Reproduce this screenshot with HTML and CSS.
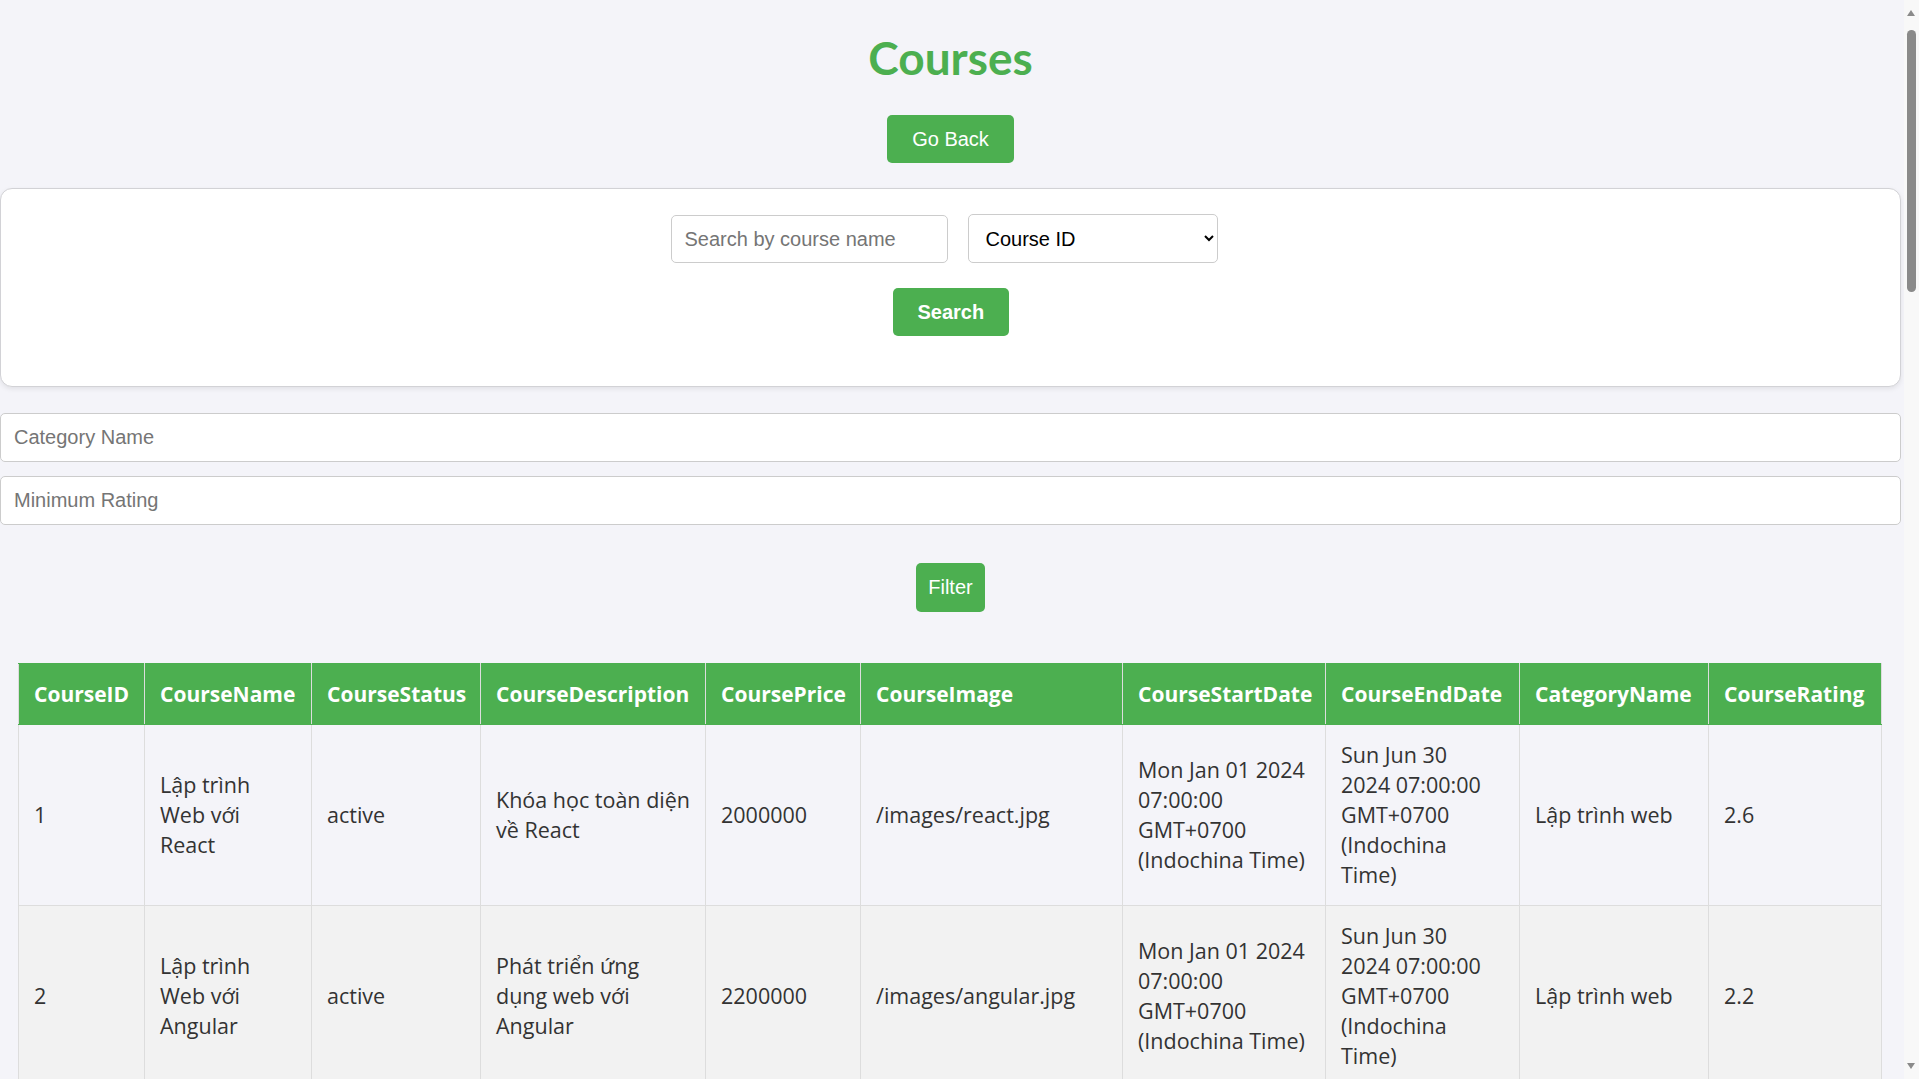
FILE: index.html
```html
<!DOCTYPE html>
<html lang="vi">
<head>
<meta charset="utf-8">
<title>Courses</title>
<link rel="stylesheet" href="styles.css">
</head>
<body>
<div class="page">
  <h1 class="title">Courses</h1>
  <div class="center"><button class="btn btn-back">Go Back</button></div>

  <div class="card">
    <div class="search-row">
      <input class="field search-input" type="text" placeholder="Search by course name">
      <select class="field sort-select">
        <option>Course ID</option>
      </select>
    </div>
    <div class="center"><button class="btn btn-search">Search</button></div>
  </div>

  <input class="field wide first" type="text" placeholder="Category Name">
  <input class="field wide second" type="text" placeholder="Minimum Rating">

  <div class="center"><button class="btn btn-filter">Filter</button></div>

  <table class="courses">
    <colgroup>
      <col class="c1"><col class="c2"><col class="c3"><col class="c4"><col class="c5">
      <col class="c6"><col class="c7"><col class="c8"><col class="c9"><col class="c10">
    </colgroup>
    <thead>
      <tr>
        <th>CourseID</th>
        <th>CourseName</th>
        <th>CourseStatus</th>
        <th>CourseDescription</th>
        <th>CoursePrice</th>
        <th>CourseImage</th>
        <th>CourseStartDate</th>
        <th>CourseEndDate</th>
        <th>CategoryName</th>
        <th>CourseRating</th>
      </tr>
    </thead>
    <tbody>
      <tr>
        <td>1</td>
        <td>Lập trình Web với React</td>
        <td>active</td>
        <td>Khóa học toàn diện về React</td>
        <td>2000000</td>
        <td>/images/react.jpg</td>
        <td>Mon Jan 01 2024 07:00:00 GMT+0700 (Indochina Time)</td>
        <td class="end-date">Sun Jun 30 2024 07:00:00 GMT+0700 (Indochina Time)</td>
        <td>Lập trình web</td>
        <td>2.6</td>
      </tr>
      <tr>
        <td>2</td>
        <td>Lập trình Web với Angular</td>
        <td>active</td>
        <td>Phát triển ứng dụng web với Angular</td>
        <td>2200000</td>
        <td>/images/angular.jpg</td>
        <td>Mon Jan 01 2024 07:00:00 GMT+0700 (Indochina Time)</td>
        <td class="end-date">Sun Jun 30 2024 07:00:00 GMT+0700 (Indochina Time)</td>
        <td>Lập trình web</td>
        <td>2.2</td>
      </tr>
    </tbody>
  </table>
</div>
<div class="scrollbar" aria-hidden="true">
  <span class="arrow up"></span>
  <span class="thumb"></span>
  <span class="arrow down"></span>
</div>
</body>
</html>
```

FILE: styles.css
```css
html, body {
  margin: 0;
  padding: 0;
}

body {
  background: #f4f4f9;
  font-family: "Open Sans", "Noto Sans", sans-serif;
  color: #333;
}

.page {
  width: 1901px;
}

.title {
  margin: 30px 0 29px;
  font-family: Lato, "Open Sans", sans-serif;
  font-size: 46px;
  line-height: 56px;
  font-weight: 700;
  color: #4caf50;
  text-align: center;
}

.center {
  display: flex;
  justify-content: center;
}

.btn {
  box-sizing: border-box;
  height: 48px;
  border: none;
  border-radius: 5px;
  background: #4caf50;
  color: #fff;
  font-family: "Liberation Sans", Arial, sans-serif;
  font-size: 20px;
  padding: 0 25px;
  cursor: pointer;
}

.btn-back {
  width: 127px;
}

.btn-search {
  width: 116px;
  font-weight: 700;
}

.btn-filter {
  width: 69px;
  height: 49px;
  padding: 0;
  margin-top: 38px;
}

.card {
  box-sizing: border-box;
  margin-top: 25px;
  height: 199px;
  background: #fff;
  border: 1px solid #d2d2d6;
  border-radius: 12px;
  box-shadow: 0 2px 5px rgba(0, 0, 0, 0.08);
  padding-top: 25px;
}

.search-row {
  display: flex;
  justify-content: center;
  align-items: flex-start;
  gap: 20px;
  margin-bottom: 25px;
  padding-right: 13px;
}

.field {
  box-sizing: border-box;
  height: 49px;
  border: 1px solid #ccc;
  border-radius: 5px;
  background: #fff;
  font-family: "Liberation Sans", Arial, sans-serif;
  font-size: 20px;
  color: #000;
  padding: 0 13px;
  margin: 0;
  outline: none;
}

.field::placeholder {
  color: #757575;
}

.search-input {
  width: 277px;
  margin-top: 1px;
  height: 48px;
}

.sort-select {
  width: 250px;
  padding: 0 10px 0 13px;
}

.wide {
  display: block;
  width: 100%;
}

.wide.first {
  margin-top: 26px;
}

.wide.second {
  margin-top: 14px;
}

.courses {
  margin: 51px 0 0 18px;
  width: 1863px;
  border-collapse: collapse;
  table-layout: fixed;
  font-size: 21.5px;
  line-height: 30px;
}

.c1 { width: 126px; }
.c2 { width: 167px; }
.c3 { width: 169px; }
.c4 { width: 225px; }
.c5 { width: 155px; }
.c6 { width: 262px; }
.c7 { width: 203px; }
.c8 { width: 194px; }
.c9 { width: 189px; }
.c10 { width: 173px; }

.courses th,
.courses td {
  border: 1px solid #ddd;
  padding: 15px;
  text-align: left;
  vertical-align: middle;
}

.courses td.end-date {
  padding-right: 24px;
}

.courses th {
  background: #4caf50;
  color: #fff;
  font-size: 21px;
  font-weight: 700;
  border-color: #4caf50 #ddd;
  white-space: nowrap;
}

.courses tbody tr:nth-child(even) td {
  background: #f2f2f2;
}

.scrollbar {
  position: fixed;
  top: 0;
  right: 0;
  bottom: 0;
  width: 15px;
  background: #f8f8f8;
}

.thumb {
  position: absolute;
  top: 30px;
  left: 3px;
  width: 9px;
  height: 262px;
  border-radius: 5px;
  background: #8a8a8a;
}

.arrow {
  position: absolute;
  left: 3px;
  width: 0;
  height: 0;
  border-left: 4.5px solid transparent;
  border-right: 4.5px solid transparent;
}

.arrow.up {
  top: 10px;
  border-bottom: 6px solid #8a8a8a;
}

.arrow.down {
  bottom: 10px;
  border-top: 6px solid #8a8a8a;
}
```
